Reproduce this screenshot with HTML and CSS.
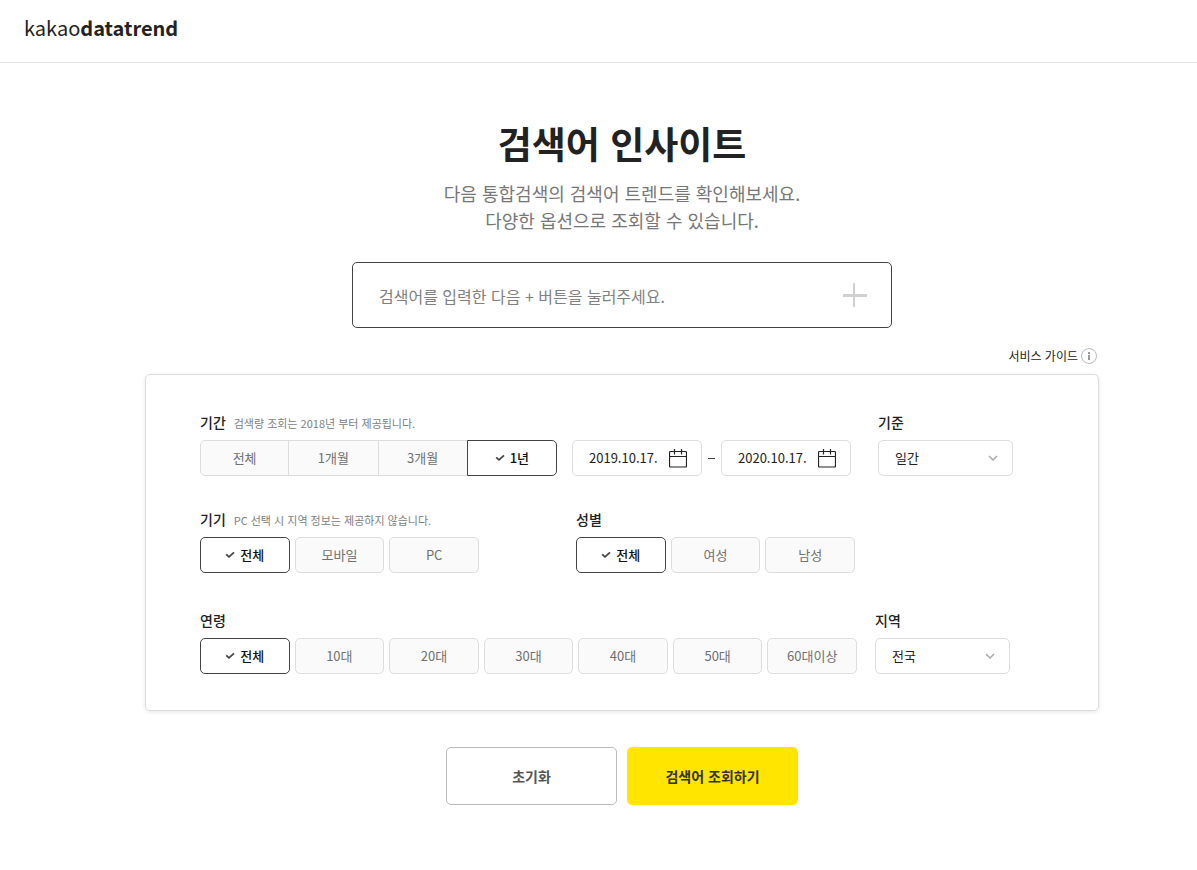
FILE: index.html
```html
<!DOCTYPE html>
<html lang="ko">
<head>
  <meta charset="utf-8">
  <title>검색어 인사이트 - kakaodatatrend</title>
  <link rel="stylesheet" href="styles.css">
</head>
<body>
  <svg class="sprite" aria-hidden="true">
    <symbol id="check" viewBox="0 0 10 8"><path d="M1.200 3.300 4 5.800 9 1.300" fill="none" stroke="currentColor" stroke-width="1.800"/></symbol>
    <symbol id="calendar" viewBox="0 0 18 19"><path d="M1.500 2.500h15a1 1 0 0 1 1 1v13.500a1 1 0 0 1-1 1h-15a1 1 0 0 1-1-1V3.500a1 1 0 0 1 1-1zM.5 7.500h17M5.500 0v5.500M12.500 0v5.500" fill="none" stroke="currentColor" stroke-width="1.200"/></symbol>
    <symbol id="arrow" viewBox="0 0 10 6"><path d="M1 1l4 4 4-4" fill="none" stroke="currentColor" stroke-width="1.500"/></symbol>
  </svg>

  <header class="header">
    <a class="logo" href="#">kakao<b>datatrend</b></a>
  </header>

  <main class="main">
    <h1 class="title">검색어 인사이트</h1>
    <p class="desc">다음 통합검색의 검색어 트렌드를 확인해보세요.<br>다양한 옵션으로 조회할 수 있습니다.</p>

    <form class="form">
      <div class="search">
        <input class="search-input" type="text" aria-label="검색어" placeholder="검색어를 입력한 다음 + 버튼을 눌러주세요.">
        <button class="search-add" type="button" aria-label="검색어 추가">
          <svg width="24" height="24" viewBox="0 0 24 24"><path d="M11 0v24" stroke="currentColor" stroke-width="2"/><path d="M0 12.500h24" stroke="currentColor" stroke-width="3"/></svg>
        </button>
      </div>

      <a class="guide" href="#">서비스 가이드
        <svg width="16" height="16" viewBox="0 0 16 16"><circle cx="8" cy="8" r="7.500" fill="none" stroke="#bbb"/><path d="M8 4v2M8 7v5" stroke="#777" stroke-width="1.500"/></svg>
      </a>

      <div class="panel">
        <div class="row">
          <fieldset class="group period">
            <legend class="label">기간 <small>검색량 조회는 2018년 부터 제공됩니다.</small></legend>
            <div class="options joined">
              <label class="option"><input type="radio" name="period"><svg><use href="#check"/></svg>전체</label>
              <label class="option"><input type="radio" name="period"><svg><use href="#check"/></svg>1개월</label>
              <label class="option"><input type="radio" name="period"><svg><use href="#check"/></svg>3개월</label>
              <label class="option"><input type="radio" name="period" checked><svg><use href="#check"/></svg>1년</label>
            </div>
          </fieldset>
          <div class="dates">
            <div class="date">
              <input type="text" aria-label="시작일" value="2019.10.17.">
              <button type="button" aria-label="시작일 선택"><svg width="18" height="19"><use href="#calendar"/></svg></button>
            </div>
            <span class="dash"></span>
            <div class="date">
              <input type="text" aria-label="종료일" value="2020.10.17.">
              <button type="button" aria-label="종료일 선택"><svg width="18" height="19"><use href="#calendar"/></svg></button>
            </div>
          </div>
          <div class="group unit">
            <label class="label" for="unit">기준</label>
            <div class="select">
              <select id="unit"><option>일간</option><option>주간</option><option>월간</option></select>
              <svg width="10" height="6"><use href="#arrow"/></svg>
            </div>
          </div>
        </div>

        <div class="row">
          <fieldset class="group device">
            <legend class="label">기기 <small>PC 선택 시 지역 정보는 제공하지 않습니다.</small></legend>
            <div class="options">
              <label class="option"><input type="radio" name="device" checked><svg><use href="#check"/></svg>전체</label>
              <label class="option"><input type="radio" name="device"><svg><use href="#check"/></svg>모바일</label>
              <label class="option"><input type="radio" name="device"><svg><use href="#check"/></svg>PC</label>
            </div>
          </fieldset>
          <fieldset class="group gender">
            <legend class="label">성별</legend>
            <div class="options">
              <label class="option"><input type="radio" name="gender" checked><svg><use href="#check"/></svg>전체</label>
              <label class="option"><input type="radio" name="gender"><svg><use href="#check"/></svg>여성</label>
              <label class="option"><input type="radio" name="gender"><svg><use href="#check"/></svg>남성</label>
            </div>
          </fieldset>
        </div>

        <div class="row row-last">
          <fieldset class="group age">
            <legend class="label">연령</legend>
            <div class="options">
              <label class="option"><input type="checkbox" name="age" checked><svg><use href="#check"/></svg>전체</label>
              <label class="option"><input type="checkbox" name="age"><svg><use href="#check"/></svg>10대</label>
              <label class="option"><input type="checkbox" name="age"><svg><use href="#check"/></svg>20대</label>
              <label class="option"><input type="checkbox" name="age"><svg><use href="#check"/></svg>30대</label>
              <label class="option"><input type="checkbox" name="age"><svg><use href="#check"/></svg>40대</label>
              <label class="option"><input type="checkbox" name="age"><svg><use href="#check"/></svg>50대</label>
              <label class="option"><input type="checkbox" name="age"><svg><use href="#check"/></svg>60대이상</label>
            </div>
          </fieldset>
          <div class="group region">
            <label class="label" for="region">지역</label>
            <div class="select">
              <select id="region"><option>전국</option><option>서울</option><option>경기</option></select>
              <svg width="10" height="6"><use href="#arrow"/></svg>
            </div>
          </div>
        </div>
      </div>

      <div class="actions">
        <button class="btn" type="reset">초기화</button>
        <button class="btn btn-primary" type="submit">검색어 조회하기</button>
      </div>
    </form>
  </main>
</body>
</html>
```

FILE: styles.css
```css
* {
  box-sizing: border-box;
}
body {
  margin: 0;
  background: #fff;
  color: #222;
  font-family: "Noto Sans CJK KR", sans-serif;
  font-size: 13px;
  line-height: 20px;
}
input, select, button {
  font: inherit;
  color: inherit;
}
button {
  cursor: pointer;
}
.sprite {
  display: none;
}

/* header */
.header {
  display: flex;
  align-items: center;
  height: 63px;
  padding: 0 24px 6px;
  border-bottom: 1px solid #e5e5e5;
}
.logo {
  color: #222;
  font-size: 20px;
  font-weight: 400;
  text-decoration: none;
}
.logo b {
  font-weight: 700;
}

/* main */
.main {
  padding: 52px 0 48px 47px;
}
.title {
  margin: 0 0 9px;
  font-size: 37px;
  line-height: 56px;
  text-align: center;
}
.desc {
  margin: 0 0 28px;
  color: #777;
  font-size: 18px;
  line-height: 27px;
  text-align: center;
}
.form {
  display: flex;
  flex-direction: column;
  max-width: 954px;
  margin: 0 auto;
}
.search {
  display: flex;
  align-items: center;
  align-self: center;
  width: 100%;
  max-width: 540px;
  height: 66px;
  padding: 0 24px 0 26px;
  border: 1px solid #444;
  border-radius: 5px;
}
.search-input {
  flex: 1;
  min-width: 0;
  padding: 2px 0 0;
  border: 0;
  outline: 0;
  background: none;
  font-size: 16px;
}
.search-input::placeholder {
  color: #808080;
  opacity: 1;
}
.search-add {
  display: flex;
  padding: 0;
  border: 0;
  background: none;
  color: #d0d0d0;
}
.guide {
  display: flex;
  align-items: center;
  align-self: flex-end;
  gap: 3px;
  margin: 18px 2px 8px 0;
  color: #222;
  font-size: 12px;
  text-decoration: none;
}

/* option panel */
.panel {
  padding: 36px 54px;
  border: 1px solid #ddd;
  border-radius: 5px;
  box-shadow: 0 1px 4px rgba(0, 0, 0, 0.1);
}
.row {
  display: flex;
  align-items: flex-end;
  margin-bottom: 32px;
}
.row-last {
  margin: 36px 0 0;
}
.group {
  min-width: 0;
  margin: 0;
  padding: 0;
  border: 0;
}
.label {
  display: block;
  margin-bottom: 7px;
  padding: 0;
  font-size: 14px;
  font-weight: 500;
  line-height: 22px;
}
.label small {
  margin-left: 4px;
  color: #808080;
  font-size: 11px;
  font-weight: 400;
  line-height: 16px;
}
.options {
  display: grid;
  grid-auto-flow: column;
  grid-auto-columns: 1fr;
  gap: 5px;
}
.option {
  display: flex;
  align-items: center;
  justify-content: center;
  height: 36px;
  border: 1px solid #ddd;
  border-radius: 5px;
  background: #fafafa;
  color: #707070;
  cursor: pointer;
}
.option input {
  appearance: none;
  width: 0;
  height: 0;
  margin: 0;
}
.option svg {
  display: none;
  width: 10px;
  height: 8px;
  margin-right: 5px;
  color: #444;
}
.option:has(:checked) {
  border-color: #444;
  background: #fff;
  color: #111;
  font-weight: 500;
}
.option :checked + svg {
  display: block;
}
.joined {
  gap: 0;
}
.joined .option {
  border-radius: 0;
}
.joined .option + .option {
  margin-left: -1px;
}
.joined .option:first-child {
  border-radius: 5px 0 0 5px;
}
.joined .option:last-child {
  border-radius: 0 5px 5px 0;
}
.period {
  flex: 0 1 357px;
}
.device,
.gender {
  flex: 0 1 279px;
}
.gender {
  margin-left: 97px;
}
.age {
  flex: 0 1 657px;
}
.dates {
  display: flex;
  align-items: center;
  margin-left: 15px;
}
.date {
  display: flex;
  align-items: center;
  justify-content: space-between;
  width: 130px;
  height: 36px;
  padding: 0 14px 0 16px;
  border: 1px solid #ddd;
  border-radius: 5px;
}
.date input {
  width: 76px;
  padding: 0;
  border: 0;
  outline: 0;
  background: none;
}
.date button {
  display: flex;
  padding: 0;
  border: 0;
  background: none;
}
.dash {
  width: 7px;
  height: 1px;
  margin: 0 6px;
  background: #444;
}
.unit,
.region {
  flex: 0 0 135px;
}
.unit {
  margin-left: 27px;
}
.region {
  margin-left: 18px;
}
.select {
  display: grid;
  align-items: center;
}
.select select,
.select svg {
  grid-area: 1 / 1;
}
.select select {
  appearance: none;
  width: 100%;
  height: 36px;
  padding: 0 32px 0 16px;
  border: 1px solid #ddd;
  border-radius: 5px;
  background: #fff;
}
.select svg {
  justify-self: end;
  margin-right: 15px;
  color: #aaa;
  pointer-events: none;
}

/* buttons */
.actions {
  display: flex;
  justify-content: center;
  gap: 10px;
  margin-top: 36px;
}
.btn {
  width: 171px;
  height: 58px;
  border: 1px solid #bbb;
  border-radius: 5px;
  background: #fff;
  color: #555;
  font-size: 14px;
  font-weight: 700;
}
.btn-primary {
  border-color: #ffe500;
  background: #ffe500;
  color: #333;
}
```
